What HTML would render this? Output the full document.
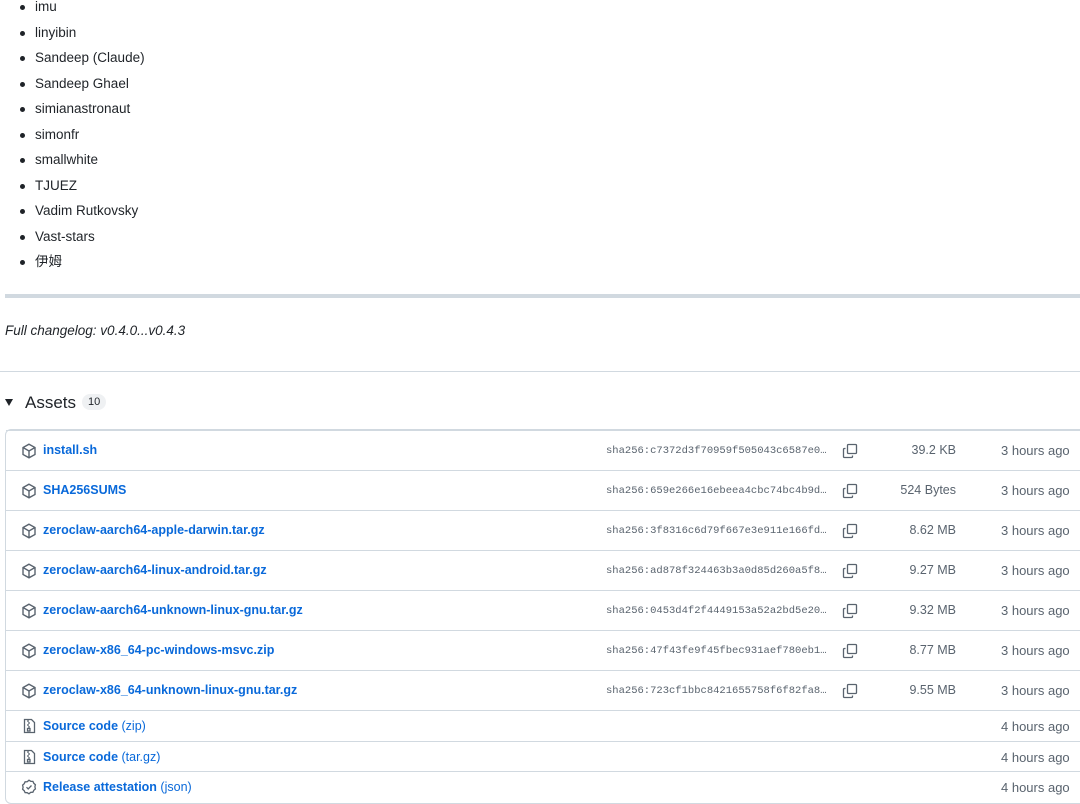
<!DOCTYPE html>
<html><head><meta charset="utf-8"><style>
body{margin:0;width:1080px;height:804px;overflow:hidden;background:#fff;font-family:"Liberation Sans","Noto Sans CJK SC",sans-serif;color:#1f2328;font-size:13.5px}
ul{position:absolute;left:0;top:-3px;margin:0;padding:0;list-style:none}
li{position:absolute;left:35px;white-space:nowrap;line-height:20px}
li:before{content:"";position:absolute;left:-15px;top:8px;width:5px;height:5px;border-radius:50%;background:#1f2328}
.hr{position:absolute;left:5px;right:0;top:294px;height:4px;background:#d1d9e0}
.cl{position:absolute;left:5px;top:323px;font-style:italic;font-size:13.5px}
.hr2{position:absolute;left:0;right:0;top:371px;height:1px;background:#d1d9e0}
.ah{position:absolute;left:5px;top:393px;font-size:17px}
.tri{display:inline-block;width:0;height:0;border-left:4.5px solid transparent;border-right:4.5px solid transparent;border-top:7px solid #1f2328;margin-right:12px;vertical-align:2px}
.cnt{display:inline-block;background:#eff1f3;border-radius:10px;font-size:11px;padding:2px 6px;margin-left:6px;vertical-align:3px}
.box{position:absolute;left:5px;top:429px;width:1090px;height:373px;border:1px solid #d1d9e0;border-radius:6px}
.r{position:absolute;left:0;right:0;border-top:1px solid #d1d9e0}
.r:first-child{border-top:none}
.n{position:absolute;left:37px;color:#0969da;font-weight:bold;font-size:12.5px}
.n span{font-weight:normal}
.ic{position:absolute;left:15px}
.sha{position:absolute;left:600px;font-family:"Liberation Mono",monospace;font-size:10.5px;color:#59636e}
.cp{position:absolute;left:836px}
.sz{position:absolute;left:850px;width:100px;text-align:right;color:#59636e;font-size:12.5px}
.t{position:absolute;left:995px;color:#59636e;font-size:13px}
</style></head><body>
<ul>
<li style="top:0">imu</li><li style="top:26px">linyibin</li><li style="top:51px">Sandeep (Claude)</li><li style="top:77px">Sandeep Ghael</li><li style="top:102px">simianastronaut</li><li style="top:128px">simonfr</li><li style="top:153px">smallwhite</li><li style="top:179px">TJUEZ</li><li style="top:204px">Vadim Rutkovsky</li><li style="top:230px">Vast-stars</li><li style="top:255px">伊姆</li>
</ul>
<div class="hr"></div>
<div class="cl">Full changelog: v0.4.0...v0.4.3</div>
<div class="hr2"></div>
<div class="ah"><span class="tri"></span>Assets<span class="cnt">10</span></div>
<div class="box">
<script>
const rows=[["install.sh","c7372d3f70959f505043c6587e0…","39.2 KB"],["SHA256SUMS","659e266e16ebeea4cbc74bc4b9d…","524 Bytes"],["zeroclaw-aarch64-apple-darwin.tar.gz","3f8316c6d79f667e3e911e166fd…","8.62 MB"],["zeroclaw-aarch64-linux-android.tar.gz","ad878f324463b3a0d85d260a5f8…","9.27 MB"],["zeroclaw-aarch64-unknown-linux-gnu.tar.gz","0453d4f2f4449153a52a2bd5e20…","9.32 MB"],["zeroclaw-x86_64-pc-windows-msvc.zip","47f43fe9f45fbec931aef780eb1…","8.77 MB"],["zeroclaw-x86_64-unknown-linux-gnu.tar.gz","723cf1bbc8421655758f6f82fa8…","9.55 MB"]];
const pkg='<svg class="ic" style="top:12px" width="16" height="16" viewBox="0 0 16 16" fill="none" stroke="#59636e" stroke-width="1.4"><path d="M8 1.2l6 3.3v7L8 14.8 2 11.5v-7z M2 4.5L8 8l6-3.5 M8 8v6.8"/></svg>';
const cp='<svg class="cp" style="top:12px" width="16" height="16" viewBox="0 0 16 16" fill="none" stroke="#59636e" stroke-width="1.3"><rect x="5.5" y="1.5" width="9" height="9" rx="1"/><path d="M3.5 5.5h-1a1 1 0 0 0-1 1v7a1 1 0 0 0 1 1h7a1 1 0 0 0 1-1v-1"/></svg>';
let h='';
rows.forEach((r,i)=>{h+=`<div class="r" style="top:${i*40}px;height:40px">${pkg}<div class="n" style="top:12px">${r[0]}</div><div class="sha" style="top:14px">sha256:${r[1]}</div>${cp}<div class="sz" style="top:12px">${r[2]}</div><div class="t" style="top:12px">3 hours ago</div></div>`});
const zip='<svg class="ic" style="top:7px" width="16" height="16" viewBox="0 0 16 16" fill="none" stroke="#59636e" stroke-width="1.3"><path d="M3.5 1.5h7l3 3v10h-10z M7 2v2 M8 4v2 M7 6v2 M8 8v2"/><rect x="6.5" y="10.5" width="2.5" height="2.5"/></svg>';
const chk='<svg class="ic" style="top:7px" width="16" height="16" viewBox="0 0 16 16" fill="none" stroke="#59636e" stroke-width="1.3"><path d="M8 1.2l1.8 1.1 2.1.1.9 1.9 1.6 1.4-.5 2.1.5 2.1-1.6 1.4-.9 1.9-2.1.1L8 14.8l-1.8-1.1-2.1-.1-.9-1.9L1.6 10.3l.5-2.1-.5-2.1 1.6-1.4.9-1.9 2.1-.1z M5.5 8.2l1.7 1.7 3.3-3.4"/></svg>';
const ex=[[zip,"Source code","(zip)"],[zip,"Source code","(tar.gz)"],[chk,"Release attestation","(json)"]];
ex.forEach((e,i)=>{h+=`<div class="r" style="top:${280+i*30.5}px;height:30px">${e[0]}<div class="n" style="top:8px">${e[1]} <span>${e[2]}</span></div><div class="t" style="top:8px">4 hours ago</div></div>`});
document.write(h);
</script>
</div>
</body></html>
